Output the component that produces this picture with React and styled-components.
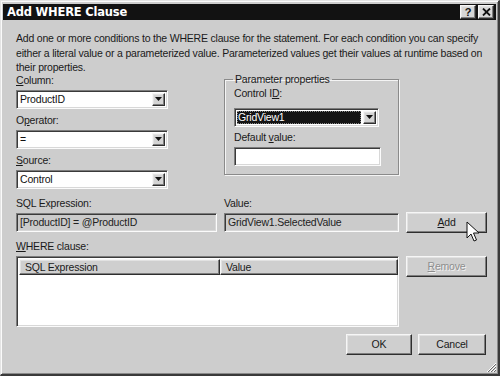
import React from "react";
import styled, { createGlobalStyle, css } from "styled-components";

const GlobalStyle = createGlobalStyle`
  html, body {
    margin: 0;
    padding: 0;
    background: #cdcdcd;
  }
  body {
    font-family: "Liberation Sans", Arial, sans-serif;
    font-size: 10.5px;
    letter-spacing: -0.2px;
    color: #111;
  }
  u {
    text-decoration: underline;
    text-underline-offset: 1px;
  }
`;

const sunken = css`
  border-top: 1px solid #7c7c7c;
  border-left: 1px solid #7c7c7c;
  border-bottom: 1px solid #fbfbfb;
  border-right: 1px solid #fbfbfb;
  box-shadow: inset 1px 1px 0 #3a3a3a, inset -1px -1px 0 #d8d8d8;
`;

const raised = css`
  border-top: 1px solid #f6f6f6;
  border-left: 1px solid #f6f6f6;
  border-bottom: 1px solid #2e2e2e;
  border-right: 1px solid #2e2e2e;
  box-shadow: inset -1px -1px 0 #7e7e7e, inset 1px 1px 0 #e2e2e2;
`;

function Dialog() {
  return (
    <Window>
      <TitleBar>
        <Caption>Add WHERE Clause</Caption>
        <CaptionButtons>
          <CaptionButton>?</CaptionButton>
          <CaptionButton>
            <svg width="9" height="8" viewBox="0 0 9 8">
              <path d="M1 0.5 L8 7.5 M8 0.5 L1 7.5" stroke="#111" strokeWidth="1.8" />
            </svg>
          </CaptionButton>
        </CaptionButtons>
      </TitleBar>

      <Body>
        <Description>
          Add one or more conditions to the WHERE clause for the statement. For each condition you can specify
          <br />
          either a literal value or a parameterized value. Parameterized values get their values at runtime based on
          <br />
          their properties.
        </Description>

        <Grid>
          <LeftFields>
            <Label>
              <u>C</u>olumn:
            </Label>
            <Select value="ProductID" />
            <Label $top={4}>
              O<u>p</u>erator:
            </Label>
            <Select value="=" />
            <Label $top={4}>
              <u>S</u>ource:
            </Label>
            <Select value="Control" />
          </LeftFields>

          <GroupBox>
            <Legend>Parameter properties</Legend>
            <Label $top={0}>
              Control I<u>D</u>:
            </Label>
            <Spacer $h={5} />
            <Select value="GridView1" width={145} selected />
            <Label $top={3}>
              Default <u>v</u>alue:
            </Label>
            <TextBox $width={147} $white />
          </GroupBox>

          <div />

          <FieldCol>
            <Label $top={0}>SQL Expression:</Label>
            <TextBox>[ProductID] = @ProductID</TextBox>
          </FieldCol>
          <FieldCol>
            <Label $top={0}>Value:</Label>
            <TextBox>GridView1.SelectedValue</TextBox>
          </FieldCol>
          <ButtonCell $top={23}>
            <PushButton>
              <u>A</u>dd
            </PushButton>
            <Cursor width="14" height="22" viewBox="0 0 14 22">
              <path
                d="M1 1 L1 17 L5 13 L8 20 L10.5 19 L7.5 12 L13 12 Z"
                fill="#fff"
                stroke="#111"
                strokeWidth="1"
                strokeLinejoin="miter"
              />
            </Cursor>
          </ButtonCell>

          <WhereLabel>
            <u>W</u>HERE clause:
          </WhereLabel>

          <ListView>
            <ListHeader>
              <HeaderCell $width={201}>SQL Expression</HeaderCell>
              <HeaderCell $width={178}>Value</HeaderCell>
            </ListHeader>
          </ListView>
          <ButtonCell $top={0}>
            <PushButton disabled>
              <u>R</u>emove
            </PushButton>
          </ButtonCell>
        </Grid>

        <Footer>
          <PushButton $width={66}>OK</PushButton>
          <PushButton $width={68}>Cancel</PushButton>
        </Footer>
      </Body>
      <Grip width="12" height="12" viewBox="0 0 12 12">
        <path d="M11 2 L2 11 M11 5 L5 11 M11 8 L8 11" stroke="#fff" strokeWidth="1" />
        <path d="M11 3 L3 11 M11 6 L6 11 M11 9 L9 11" stroke="#6a6a6a" strokeWidth="1" />
      </Grip>
    </Window>
  );
}

function Select({ value, width = 152, selected }) {
  return (
    <SelectBox $width={width}>
      <SelectValue $selected={selected}>{value}</SelectValue>
      <ArrowButton>
        <svg width="7" height="4" viewBox="0 0 7 4">
          <path d="M0 0 L7 0 L3.5 4 Z" fill="#111" />
        </svg>
      </ArrowButton>
    </SelectBox>
  );
}

const Window = styled.div`
  position: relative;
  width: 500px;
  height: 376px;
  box-sizing: border-box;
  background: #cdcdcd;
  border-top: 1px solid #e4e4e4;
  border-left: 1px solid #e4e4e4;
  border-right: 2px solid #3a3a3a;
  border-bottom: 2px solid #3a3a3a;
  box-shadow: inset 1px 1px 0 #fafafa, inset -1px -1px 0 #8a8a8a;
  padding: 3px 2px 0 2px;
  overflow: hidden;
`;

const TitleBar = styled.div`
  height: 16px;
  background: #121212;
  display: flex;
  align-items: center;
  justify-content: space-between;
  padding: 0 2px 0 4px;
`;

const Caption = styled.div`
  color: #fff;
  font-family: "DejaVu Sans", Verdana, sans-serif;
  font-weight: bold;
  font-size: 11.5px;
  letter-spacing: -0.2px;
`;

const CaptionButtons = styled.div`
  display: flex;
  gap: 2px;
`;

const CaptionButton = styled.div`
  ${raised};
  width: 14px;
  height: 12px;
  background: #d6d6d6;
  display: flex;
  align-items: center;
  justify-content: center;
  font-weight: bold;
  font-size: 11px;
  line-height: 1;
  color: #111;
`;

const Body = styled.div`
  padding: 11px 0 0 13px;
`;

const Description = styled.p`
  margin: 0;
  width: 475px;
  line-height: 14.5px;
  white-space: nowrap;
  color: #1a1a1a;
`;

const Grid = styled.div`
  display: grid;
  grid-template-columns: 201px 175px 81px;
  column-gap: 7px;
  align-items: start;
  margin-top: -2px;
`;

const LeftFields = styled.div`
  display: flex;
  flex-direction: column;
  align-items: flex-start;
`;

const Label = styled.div`
  margin-top: ${(p) => (p.$top ?? 0)}px;
  height: 17px;
  line-height: 15px;
  color: #1a1a1a;
`;

const Spacer = styled.div`
  height: ${(p) => p.$h}px;
`;

const SelectBox = styled.div`
  ${sunken};
  box-sizing: border-box;
  width: ${(p) => p.$width}px;
  height: 19px;
  background: #fff;
  display: flex;
  align-items: stretch;
  padding: 2px;
`;

const SelectValue = styled.div`
  flex: 1;
  display: flex;
  align-items: center;
  padding-left: 1px;
  background: ${(p) => (p.$selected ? "#141414" : "transparent")};
  color: ${(p) => (p.$selected ? "#fff" : "#111")};
  margin-right: 2px;
  outline: ${(p) => (p.$selected ? "1px dotted #888" : "none")};
  outline-offset: -1px;
`;

const ArrowButton = styled.div`
  ${raised};
  box-sizing: border-box;
  width: 13px;
  background: #d4d4d4;
  display: flex;
  align-items: center;
  justify-content: center;
`;

const GroupBox = styled.fieldset`
  box-sizing: border-box;
  margin: 0;
  height: 102px;
  border: 1px solid #8a8a8a;
  box-shadow: 1px 1px 0 #f4f4f4, inset 1px 1px 0 #f4f4f4;
  padding: 0 0 0 9px;
  display: flex;
  flex-direction: column;
  align-items: flex-start;
`;

const Legend = styled.legend`
  padding: 0 2px;
  margin-left: -1px;
  line-height: 13px;
  color: #1a1a1a;
`;

const FieldCol = styled.div`
  display: flex;
  flex-direction: column;
  margin-top: 7px;
`;

const TextBox = styled.div`
  ${sunken};
  box-sizing: border-box;
  width: ${(p) => (p.$width ? `${p.$width}px` : "100%")};
  height: 19px;
  background: ${(p) => (p.$white ? "#fff" : "#cbcbcb")};
  display: flex;
  align-items: center;
  padding-left: 3px;
  color: #222;
  white-space: nowrap;
  overflow: hidden;
`;

const ButtonCell = styled.div`
  position: relative;
  margin-top: ${(p) => p.$top}px;
`;

const PushButton = styled.button`
  ${raised};
  box-sizing: border-box;
  width: ${(p) => (p.$width ? `${p.$width}px` : "81px")};
  height: 21px;
  background: #cfcfcf;
  font-family: "Liberation Sans", Arial, sans-serif;
  font-size: 10.5px;
  letter-spacing: -0.2px;
  color: #1a1a1a;
  padding: 0;
  &:disabled {
    color: #8e8e8e;
    text-shadow: 1px 1px 0 #f2f2f2;
  }
`;

const Cursor = styled.svg`
  position: absolute;
  left: 60px;
  top: 9px;
`;

const WhereLabel = styled.div`
  grid-column: 1 / 4;
  margin-top: 6px;
  height: 17px;
  line-height: 15px;
  color: #1a1a1a;
`;

const ListView = styled.div`
  ${sunken};
  grid-column: 1 / 3;
  box-sizing: border-box;
  height: 71px;
  background: #fff;
  padding: 2px;
  overflow: hidden;
`;

const ListHeader = styled.div`
  display: flex;
  height: 16px;
  background: #cfcfcf;
`;

const HeaderCell = styled.div`
  ${raised};
  box-sizing: border-box;
  width: ${(p) => p.$width}px;
  flex-shrink: 0;
  display: flex;
  align-items: center;
  padding-left: 5px;
  background: #cfcfcf;
  color: #1a1a1a;
`;

const Footer = styled.div`
  display: flex;
  justify-content: flex-end;
  gap: 6px;
  width: 470px;
  margin-top: 7px;
`;

const Grip = styled.svg`
  position: absolute;
  right: 1px;
  bottom: 1px;
`;

export default function App() {
  return (
    <>
      <GlobalStyle />
      <Dialog />
    </>
  );
}
